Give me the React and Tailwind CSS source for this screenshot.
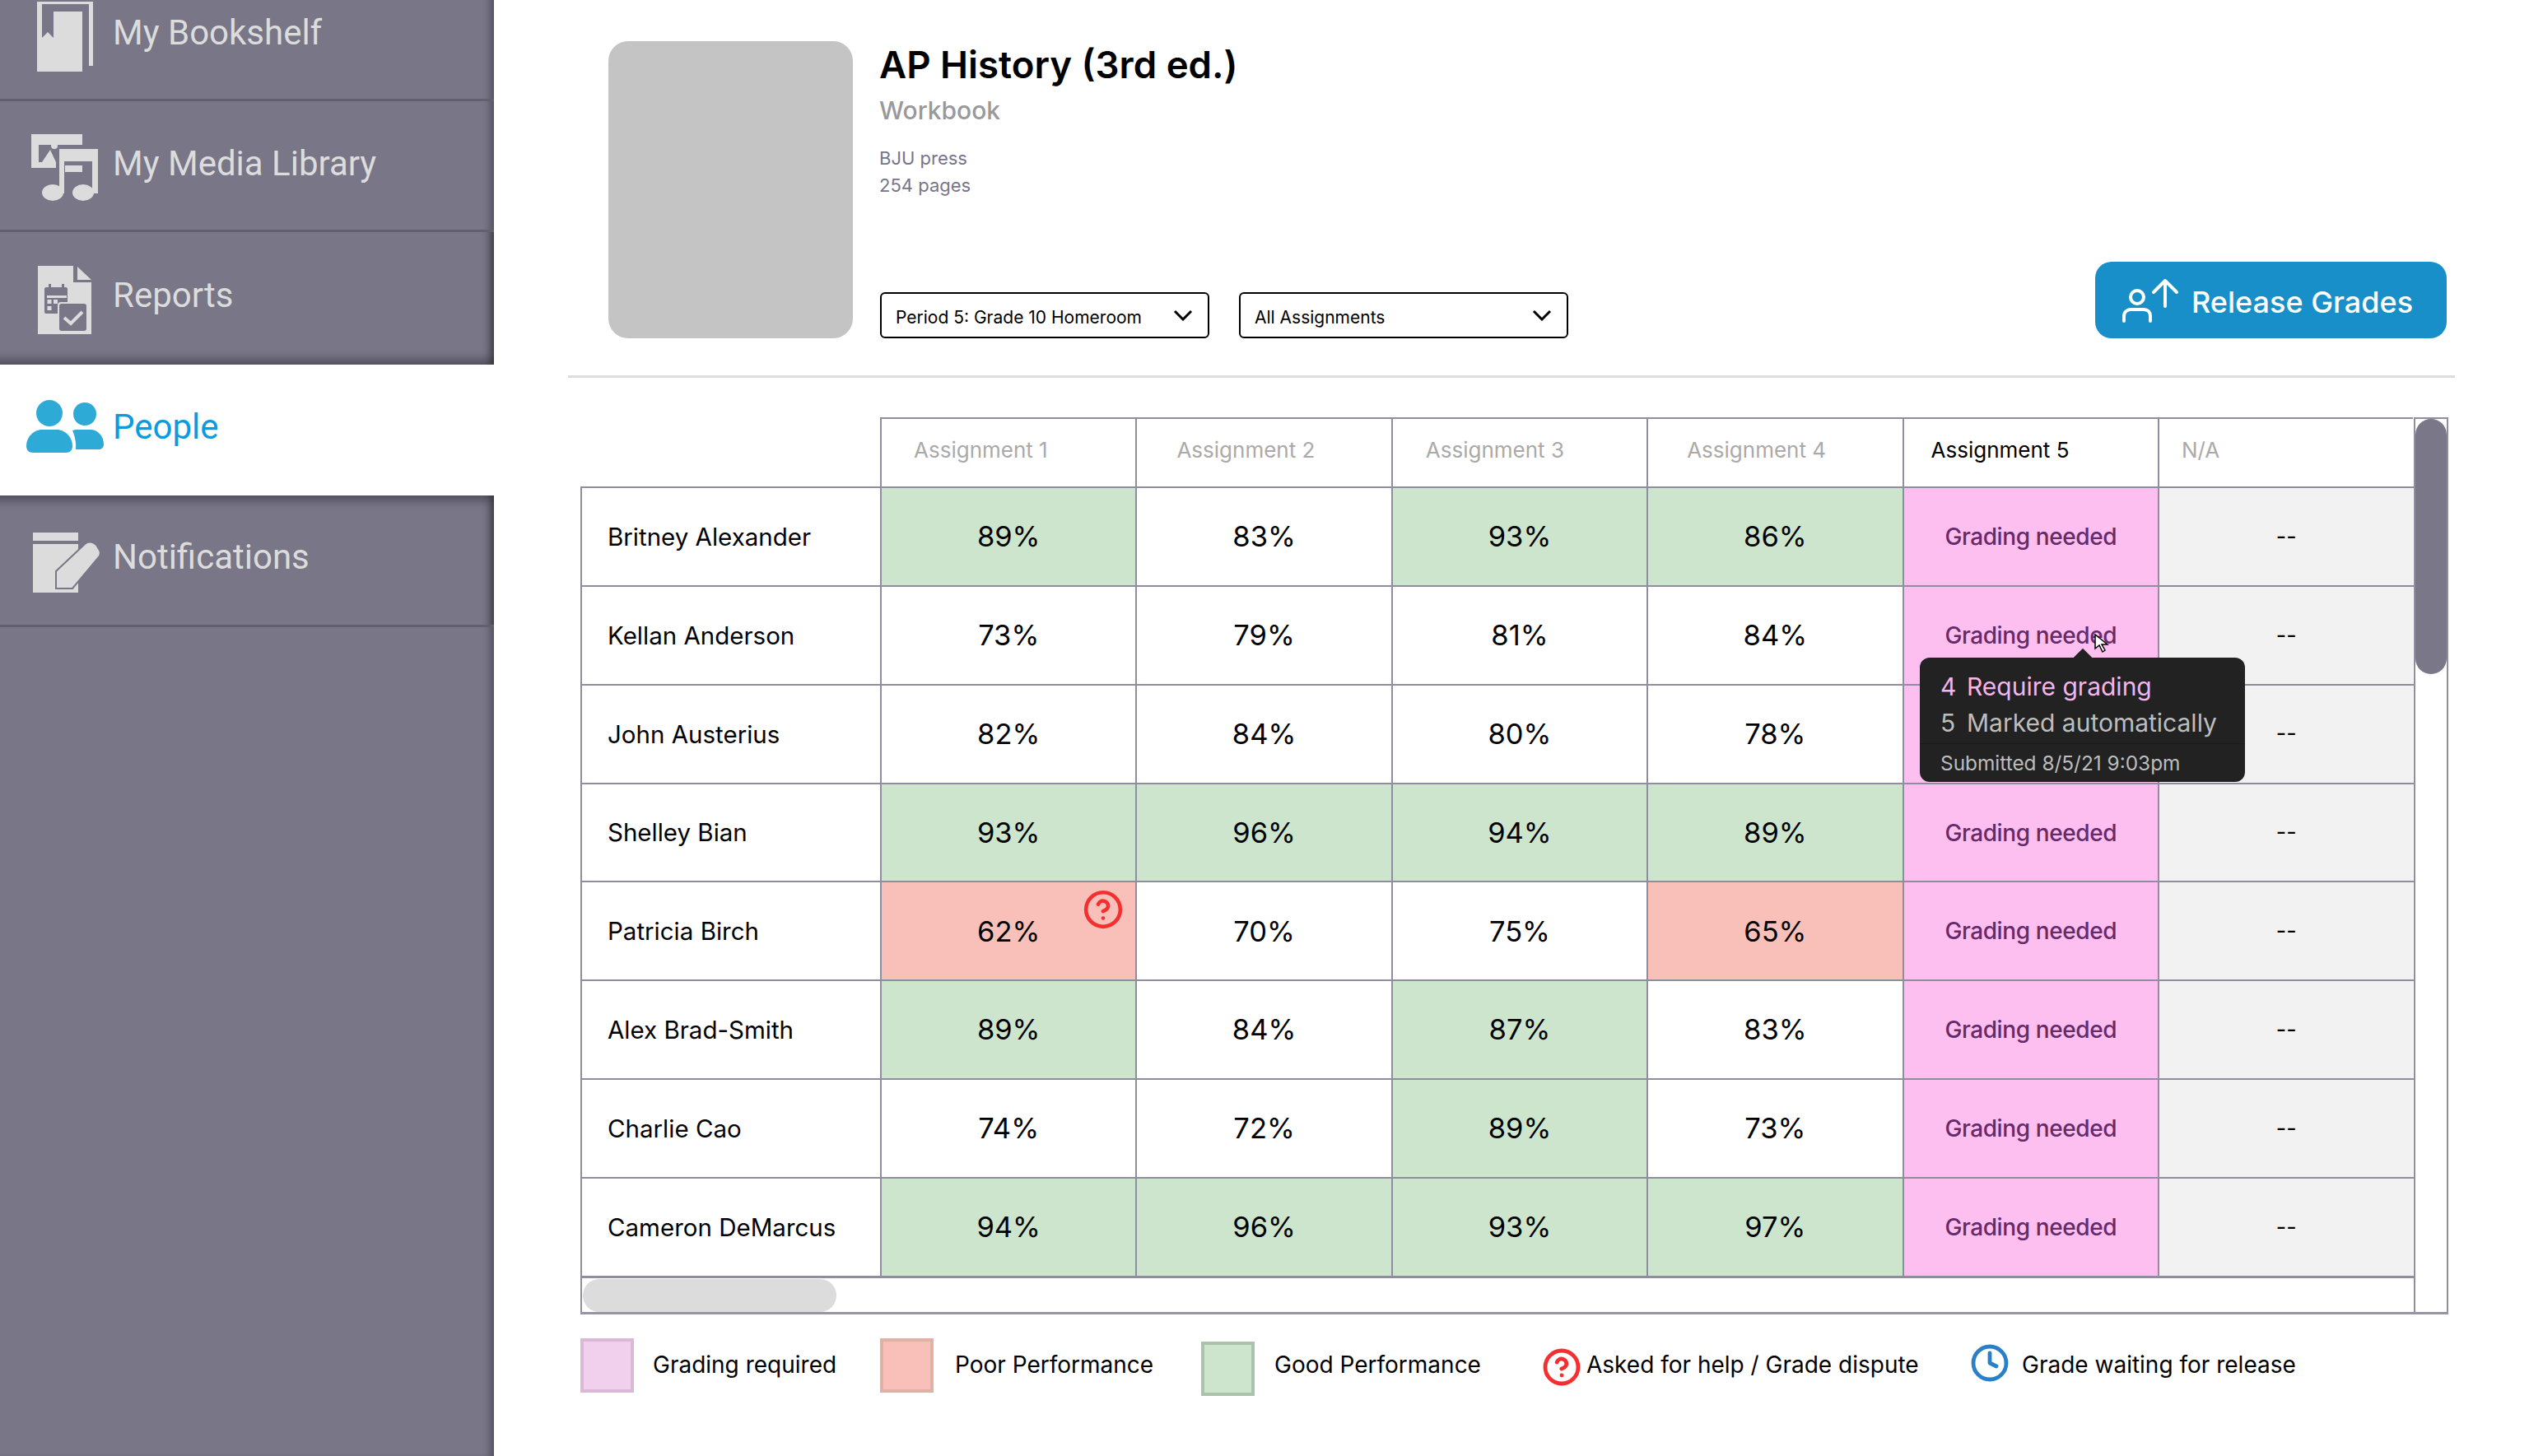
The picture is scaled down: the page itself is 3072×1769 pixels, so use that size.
import React from 'react';
import { CircleHelp, Clock } from 'lucide-react';

const rows = [
    { name: 'Britney Alexander', scores: [['89%', 'g'], ['83%'], ['93%', 'g'], ['86%', 'g']] },
    { name: 'Kellan Anderson', scores: [['73%'], ['79%'], ['81%'], ['84%']] },
    { name: 'John Austerius', scores: [['82%'], ['84%'], ['80%'], ['78%']] },
    { name: 'Shelley Bian', scores: [['93%', 'g'], ['96%', 'g'], ['94%', 'g'], ['89%', 'g']] },
    { name: 'Patricia Birch', scores: [['62%', 'r', true], ['70%'], ['75%'], ['65%', 'r']] },
    { name: 'Alex Brad-Smith', scores: [['89%', 'g'], ['84%'], ['87%', 'g'], ['83%']] },
    { name: 'Charlie Cao', scores: [['74%'], ['72%'], ['89%', 'g'], ['73%']] },
    { name: 'Cameron DeMarcus', scores: [['94%', 'g'], ['96%', 'g'], ['93%', 'g'], ['97%', 'g']] },
];

const headers = [
    { label: 'Assignment 1', cls: 'pl-[39px] text-[#aaaaaa]' },
    { label: 'Assignment 2', cls: 'pl-[48px] text-[#aaaaaa]' },
    { label: 'Assignment 3', cls: 'pl-[40px] text-[#aaaaaa]' },
    { label: 'Assignment 4', cls: 'pl-[47px] text-[#aaaaaa]' },
    { label: 'Assignment 5', cls: 'pl-[33px] text-black' },
    { label: 'N/A', cls: 'pl-[27px] text-[#aaaaaa]' },
];

const BookIcon = () => (
    <svg width="68" height="85" viewBox="0 0 68 85" fill="#dcdcdc">
        <path d="M0 0H68V78H63V3H0Z" />
        <path d="M0 3H6V44L13 37L20 44V12H55V85H0Z" />
    </svg>
);

const MediaIcon = () => (
    <svg width="82" height="82" viewBox="0 0 82 82" fill="#dcdcdc">
        <path d="M0 0H62V13H9V34H30V41H0Z" />
        <circle cx="28" cy="14" r="4" />
        <path d="M13 34L23 19L30 34Z" />
        <rect x="41" y="38" width="21" height="8" />
        <path d="M34 18H81V72H74V33H40V72H34Z" />
        <ellipse cx="26" cy="71" rx="13" ry="10" />
        <ellipse cx="63" cy="71" rx="13" ry="10" />
    </svg>
);

const ReportIcon = () => (
    <svg width="66" height="86" viewBox="0 0 66 86">
        <path d="M0 1H43V21H65V84H0Z" fill="#dcdcdc" />
        <path d="M48 2L65 18H48Z" fill="#dcdcdc" />
        <rect x="8" y="27" width="28" height="32" rx="2" fill="#787687" />
        <rect x="13" y="23" width="3" height="6" fill="#787687" />
        <rect x="29" y="23" width="3" height="6" fill="#787687" />
        <rect x="11" y="37" width="24" height="3" fill="#dcdcdc" />
        <rect x="11.5" y="42" width="5" height="5" fill="#dcdcdc" />
        <rect x="19" y="42" width="5" height="5" fill="#dcdcdc" />
        <rect x="11.5" y="50" width="5" height="5" fill="#dcdcdc" />
        <rect x="24" y="45" width="37" height="37" rx="4" fill="#dcdcdc" />
        <rect x="26" y="47" width="33" height="33" rx="3" fill="#787687" />
        <path d="M32 64L40 71L54 57" fill="none" stroke="#dcdcdc" strokeWidth="4" />
    </svg>
);

const PeopleIcon = () => (
    <svg width="94" height="64" viewBox="0 0 94 64" fill="#2dabd6">
        <circle cx="28" cy="16" r="16" />
        <circle cx="71" cy="17" r="14" />
        <path d="M0 56C0 45 9 36 19 36H37C47 36 56 45 56 56C56 61 53 64 48 64H8C3 64 0 61 0 56Z" />
        <path d="M60 60C61 50 58 42 56 37C58 36 60 36 62 36H78C86 36 94 43 94 54C94 58 91 60 88 60Z" />
    </svg>
);

const NoteIcon = () => (
    <svg width="82" height="74" viewBox="0 0 82 74" fill="#dcdcdc" className="ml-[5px]">
        <rect x="0" y="0" width="55" height="10" />
        <rect x="0" y="14" width="55" height="59" />
        <path d="M28 47L63 14C67 10 73 11 77 15L80 20C83 24 82 28 79 31L48 68H28Z" stroke="#787687" strokeWidth="2" />
    </svg>
);

const ReleaseIcon = () => (
    <svg width="68" height="54" viewBox="0 0 68 54" fill="none" stroke="white" strokeWidth="4" strokeLinecap="round" strokeLinejoin="round">
        <circle cx="18" cy="23" r="8" />
        <path d="M2 52V46C2 41 6 38 10 38H26C31 38 34 41 34 46V52" />
        <path d="M52 34V3M38 17L52 3L66 17" />
    </svg>
);

const Chevron = () => (
    <svg width="24" height="14" viewBox="0 0 24 14" fill="none" stroke="black" strokeWidth="3">
        <path d="M2 2L12 12L22 2" />
    </svg>
);

const Cursor = () => (
    <svg width="18" height="24" viewBox="0 0 18 24" fill="white" stroke="black" strokeWidth="1.5">
        <path d="M1 1V18L6 14L10 22L13 20L9 13L16 13Z" />
    </svg>
);

const SideItem = ({ icon, label, active, cls, labelCls, iconCls }) => (
    <div className={`flex items-center h-[159px] ${cls}`}>
        <div className={`w-[137px] flex justify-center pl-[20px] shrink-0 ${iconCls}`}>{icon}</div>
        <span className={`text-[42px] font-['Roboto',sans-serif] ${labelCls} ${active ? 'text-[#0a9be0]' : 'text-[#dcdcdc]'}`}>{label}</span>
    </div>
);

const Dropdown = ({ label }) => (
    <div className="flex items-center justify-between w-[400px] h-[56px] border-2 border-black rounded-[6px] pl-[17px] pr-[18px] text-[21px] text-black">
        <span className="mt-[5px]">{label}</span>
        <Chevron />
    </div>
);

const scoreBg = { g: 'bg-[#cde5cd]', r: 'bg-[#f8c0b8]' };

const App = () => {
    return (
        <div className="flex w-[3072px] h-[1769px] overflow-hidden bg-white font-['Inter',sans-serif]">
            <aside className="w-[600px] shrink-0 bg-[#787687] flex flex-col -mt-[36px] shadow-[inset_-10px_0_10px_-6px_rgba(0,0,0,0.35)]">
                <SideItem icon={<BookIcon />} label="My Bookshelf" labelCls="-mt-[5px]" iconCls="mt-[5px]" cls="border-b-[3px] border-[#62606f]" />
                <SideItem icon={<MediaIcon />} label="My Media Library" labelCls="-mt-[5px]" iconCls="mt-[5px]" cls="border-b-[3px] border-[#62606f]" />
                <SideItem icon={<ReportIcon />} label="Reports" labelCls="-mt-[9px]" iconCls="mt-[4px]" cls="h-[161px] shadow-[inset_-10px_-14px_12px_-8px_rgba(0,0,0,0.35)]" />
                <SideItem icon={<PeopleIcon />} label="People" labelCls="-mt-[9px]" iconCls="-mt-[10px]" active cls="h-[157px] bg-white" />
                <SideItem icon={<NoteIcon />} label="Notifications" labelCls="-mt-[9px]" iconCls="mt-[6px]" cls="h-[160px] border-b-[3px] border-[#62606f] shadow-[inset_-10px_14px_12px_-8px_rgba(0,0,0,0.35)]" />
            </aside>

            <main className="flex-1 pl-[90px] pr-[90px]">
                <section className="flex h-[459px] pt-[50px] pb-[45px] pl-[49px] border-b-[3px] border-[#dddddd]">
                    <div className="w-[297px] h-[361px] rounded-[24px] bg-[#c4c4c4] shrink-0" />
                    <div className="flex flex-col ml-[33px] flex-1">
                        <h1 className="mt-[1px] text-[45.6px] leading-[56px] font-semibold text-black -ml-px">AP History (3rd ed.)</h1>
                        <div className="mt-[7px] text-[30px] leading-[40px] font-medium text-[#999999] -ml-px">Workbook</div>
                        <div className="mt-[22px] text-[22px] leading-[33px] text-[#77758a] -ml-px">BJU press</div>
                        <div className="text-[22px] leading-[33px] text-[#77758a] -ml-px">254 pages</div>
                        <div className="flex items-end justify-between mt-auto pr-[10px]">
                            <div className="flex gap-[36px]">
                                <Dropdown label="Period 5: Grade 10 Homeroom" />
                                <Dropdown label="All Assignments" />
                            </div>
                            <button className="flex items-center w-[427px] h-[93px] rounded-[20px] bg-[#188fc8] pl-[33px] text-white text-[36px] font-medium">
                                <ReleaseIcon />
                                <span className="ml-[16px] mt-[4px]">Release Grades</span>
                            </button>
                        </div>
                    </div>
                </section>

                <section className="relative ml-[15px] mt-[48px] w-[2269px]">
                    <div className="flex h-[1090px] border-b-[3px] border-[#9795a5]">
                        <div className="w-[2227px] flex flex-col">
                            <div className="flex h-[84px] pl-[364px]">
                                {headers.map((h, i) => (
                                    <div key={i} className={`flex items-center w-[310.4px] pb-[6px] border-t-2 border-l-2 border-[#8f8da0] text-[26px] ${h.cls}`}>
                                        {h.label}
                                    </div>
                                ))}
                            </div>
                            {rows.map((row) => (
                                <div key={row.name} className="flex h-[120px] border-t-2 border-l-2 border-[#8f8da0] text-black">
                                    <div className="flex items-center w-[362px] pl-[31px] text-[29.5px]">{row.name}</div>
                                    {row.scores.map(([score, tone, help], i) => (
                                        <div key={i} className={`relative flex items-center justify-center w-[310.4px] border-l-2 border-[#8f8da0] text-[34.5px] ${scoreBg[tone] || ''}`}>
                                            {score}
                                            {help && <CircleHelp size={50} strokeWidth={2.2} className="absolute top-[8px] right-[14px] text-[#f52f2f]" />}
                                        </div>
                                    ))}
                                    <div className="flex items-center justify-center w-[310.4px] border-l-2 border-[#8f8da0] bg-[#fdbef0] text-[28px] tracking-[-0.4px] font-medium text-[#652a69]">
                                        Grading needed
                                    </div>
                                    <div className="flex items-center justify-center w-[310.4px] border-l-2 border-[#8f8da0] bg-[#f2f2f2] text-[27px]">
                                        --
                                    </div>
                                </div>
                            ))}
                            <div className="border-t-[3px] border-l-2 border-[#8f8da0] flex-1 pl-px pt-[1px]">
                                <div className="w-[308px] h-[40px] rounded-full bg-[#dcdcdc]" />
                            </div>
                        </div>
                        <div className="flex-1 border-t-2 border-l-2 border-r-2 border-[#8f8da0]">
                            <div className="h-[310px] rounded-full bg-[#7a7888]" />
                        </div>
                    </div>

                    <div className="absolute left-[1627px] top-[292px] w-[395px] h-[151px] rounded-[12px] bg-[#222222] text-[#bdbdbd]">
                        <div className="absolute -top-[8px] left-[190px] w-[16px] h-[16px] rotate-45 bg-[#222222]" />
                        <div className="relative flex pl-[25px] pt-[13px] text-[30px] leading-[44px] text-[#f5b5ea]">
                            <span className="w-[32px]">4</span>Require grading
                        </div>
                        <div className="flex pl-[25px] text-[30px] leading-[44px]">
                            <span className="w-[32px]">5</span>Marked automatically
                        </div>
                        <div className="mt-[3px] border-t border-[#1a1a1a] pl-[25px] pt-[5px] text-[24.4px] leading-[36px]">
                            Submitted 8/5/21 9:03pm
                        </div>
                    </div>
                    <div className="absolute left-[1839px] top-[263px]">
                        <Cursor />
                    </div>

                    <div className="flex mt-[29px] text-[28px] leading-[44px] text-black">
                        <div className="flex w-[364px]">
                            <div className="w-[65px] h-[66px] border-[4px] border-[#dbb8d8] bg-[#f0d0ec]" />
                            <span className="ml-[23px] mt-[10px]">Grading required</span>
                        </div>
                        <div className="flex w-[390px]">
                            <div className="w-[65px] h-[66px] border-[4px] border-[#e3b0a6] bg-[#f8c0b8]" />
                            <span className="ml-[26px] mt-[10px]">Poor Performance</span>
                        </div>
                        <div className="flex w-[416px]">
                            <div className="w-[65px] h-[66px] mt-[4px] border-[4px] border-[#a9c4ab] bg-[#cde5cd]" />
                            <span className="ml-[24px] mt-[10px]">Good Performance</span>
                        </div>
                        <div className="flex w-[520px]">
                            <CircleHelp size={48} strokeWidth={2.4} className="mt-[11px] -ml-[2px] text-[#f52f2f]" />
                            <span className="ml-[6px] mt-[10px]">Asked for help / Grade dispute</span>
                        </div>
                        <div className="flex">
                            <Clock size={48} strokeWidth={2.4} className="mt-[6px] -ml-[2px] text-[#2a7fc9]" />
                            <span className="ml-[15px] mt-[10px]">Grade waiting for release</span>
                        </div>
                    </div>
                </section>
            </main>
        </div>
    );
};

export default App;
